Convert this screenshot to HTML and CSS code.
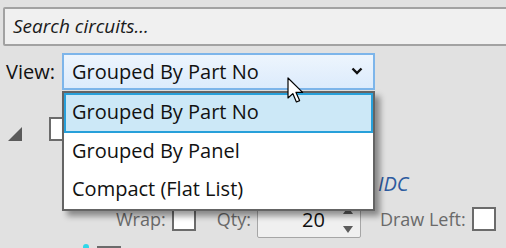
FILE: index.html
```html
<!DOCTYPE html>
<html lang="en">
<head>
    <meta charset="UTF-8">
    <title>Circuits</title>
    <link rel="stylesheet" href="styles.css">
</head>
<body>
    <div class="panel">
        <div class="search">Search circuits...</div>

        <div class="view-row">
            <span class="view-label">View:</span>
            <div class="combo">
                <span>Grouped By Part No</span>
                <svg class="chevron" width="12" height="8" viewBox="0 0 12 8">
                    <path d="M1.5 1.5 L6 6 L10.5 1.5" fill="none" stroke="#111" stroke-width="2.4"/>
                </svg>
            </div>
        </div>

        <!-- tree content under the open list -->
        <div class="tree-row">
            <span class="toggle"></span>
            <span class="check"></span>
        </div>
        <div class="idc-row">
            <span class="idc">IDC</span>
        </div>
        <div class="opts-row">
            <span class="opt-label">Wrap:</span>
            <span class="check"></span>
            <span class="opt-label qty-label">Qty:</span>
            <div class="spin">
                <span class="spin-value">20</span>
                <div class="spin-arrows">
                    <svg width="10" height="7" viewBox="0 0 10 7"><path d="M0 7 L5 0 L10 7 Z" fill="#5c5c5c"/></svg>
                    <svg width="10" height="7" viewBox="0 0 10 7"><path d="M0 0 L5 7 L10 0 Z" fill="#5c5c5c"/></svg>
                </div>
            </div>
            <span class="opt-label draw-label">Draw Left:</span>
            <span class="check"></span>
        </div>
        <div class="next-row">
            <span class="mark"></span>
            <span class="check"></span>
        </div>

        <div class="dropdown">
            <div class="item selected">Grouped By Part No</div>
            <div class="item">Grouped By Panel</div>
            <div class="item">Compact (Flat List)</div>
        </div>

        <svg class="cursor" width="19" height="27" viewBox="0 0 19 27">
            <path d="M1 1 L1 21 L5.8 16.6 L9.4 25 L12.6 23.6 L9 15.4 L15.6 15.4 Z" fill="#fff" stroke="#000" stroke-width="1.2" stroke-linejoin="round"/>
        </svg>
    </div>
</body>
</html>
```

FILE: styles.css
```css
body {
    margin: 0;
    background-color: #e1e1e1;
    font-family: "Open Sans", "Noto Sans", sans-serif;
    font-size: 20px;
    color: #111;
}
.panel {
    position: relative;
    width: 506px;
    height: 248px;
    overflow: hidden;
    padding-top: 7px;
    box-sizing: border-box;
}
.search {
    margin-left: 3px;
    height: 35px;
    width: 520px;
    border: 2px solid #a2a2a2;
    border-radius: 2px;
    background: #f0f0f0;
    font-size: 19px;
    font-style: italic;
    line-height: 35px;
    padding-left: 8px;
    color: #1a1a1a;
}
.view-row {
    display: flex;
    align-items: center;
    margin-top: 7px;
    height: 37px;
}
.view-label {
    margin-left: 6px;
    width: 56px;
}
.combo {
    display: flex;
    align-items: center;
    justify-content: space-between;
    box-sizing: border-box;
    width: 313px;
    height: 37px;
    padding: 0 10px 0 8px;
    border: 2px solid #7db5ea;
    background: linear-gradient(#edf5fd, #dcebfc);
}
.chevron {
    margin-top: -2px;
}
.tree-row {
    display: flex;
    align-items: center;
    height: 24px;
    margin-top: 27px;
}
.toggle {
    width: 0;
    height: 0;
    margin-left: 8px;
    border-left: 14px solid transparent;
    border-bottom: 14px solid #5a5a5a;
    margin-top: 9px;
}
.check {
    display: inline-block;
    flex-shrink: 0;
    box-sizing: border-box;
    width: 24px;
    height: 24px;
    border: 2px solid #6b6b6b;
    background: #fff;
}
.tree-row .check {
    margin-left: 27px;
}
.idc-row {
    box-sizing: border-box;
    height: 59px;
    padding: 29px 0 0 378px;
    line-height: 28px;
}
.idc {
    font-style: italic;
    color: #2d5b9f;
}
.opts-row {
    display: flex;
    align-items: center;
    height: 38px;
}
.opt-label {
    font-size: 18px;
    white-space: nowrap;
    flex-shrink: 0;
    color: #6a6a6a;
}
.opts-row .opt-label:first-child {
    margin-left: 116px;
    margin-right: 6px;
}
.qty-label {
    margin-left: 21px;
    margin-right: 6px;
}
.spin {
    display: flex;
    flex-shrink: 0;
    align-items: center;
    justify-content: flex-end;
    box-sizing: border-box;
    width: 104px;
    height: 38px;
    border: 1px solid #a6a6a6;
    border-radius: 2px;
    background: #f0f0f0;
    padding-right: 7px;
}
.spin-value {
    margin-right: 18px;
}
.spin-arrows {
    display: flex;
    flex-direction: column;
    gap: 12px;
    margin-top: 1px;
}
.spin-arrows svg {
    display: block;
}
.draw-label {
    margin-left: 19px;
    margin-right: 6px;
}
.next-row {
    display: flex;
    align-items: flex-start;
    margin-top: 5px;
}
.mark {
    width: 6px;
    height: 4px;
    margin-left: 83px;
    margin-top: 1px;
    border-radius: 3px 3px 0 0;
    background: #2fd7e8;
}
.next-row .check {
    margin-left: 8px;
    margin-top: 3px;
}
.dropdown {
    position: absolute;
    left: 62px;
    top: 91px;
    width: 313px;
    box-sizing: border-box;
    border: 2px solid #646464;
    background: #fff;
    box-shadow: 5px 5px 6px rgba(0, 0, 0, 0.4);
}
.item {
    height: 36px;
    line-height: 34px;
    padding-left: 7px;
    border: 1px solid transparent;
}
.item.selected {
    background: #cce8f7;
    border: 2px solid #27a0da;
    line-height: 33px;
    padding-left: 6px;
}
.cursor {
    position: absolute;
    left: 287px;
    top: 77px;
}
```
